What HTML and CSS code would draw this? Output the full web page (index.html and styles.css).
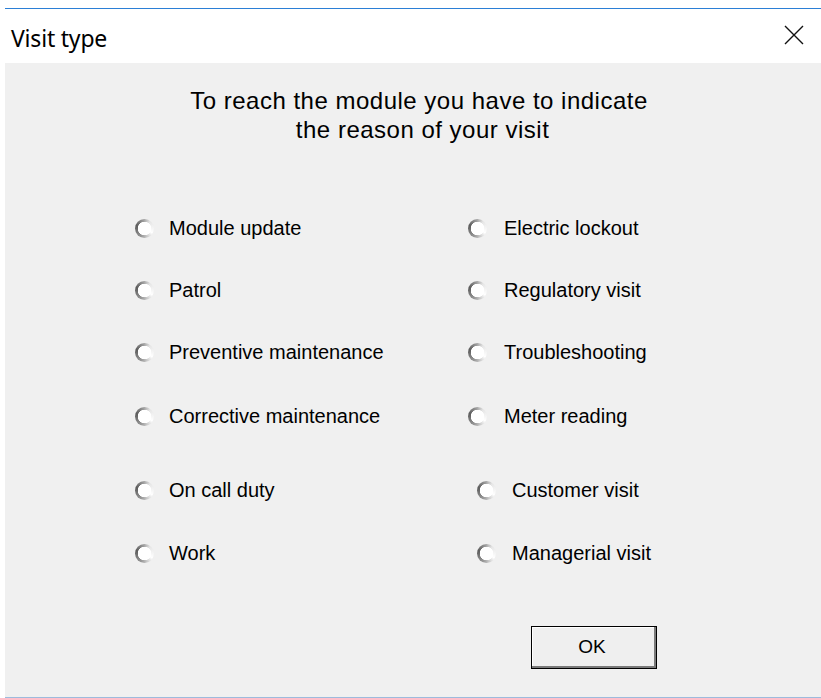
FILE: index.html
```html
<!DOCTYPE html>
<html lang="en">
<head>
<meta charset="utf-8">
<title>Visit type</title>
<link rel="stylesheet" href="styles.css">
</head>
<body>
<div class="dialog">
  <header class="titlebar">
    <span class="title">Visit type</span>
    <button class="close" aria-label="Close">
      <svg width="20" height="20" viewBox="0 0 20 20"><path d="M1 1 L19 19 M19 1 L1 19" stroke="#111" stroke-width="1.4" fill="none"/></svg>
    </button>
  </header>
  <main class="body">
    <p class="prompt">To reach the module you have to indicate<br>&nbsp;the reason of your visit</p>
    <form class="choices">
      <label class="choice"><span class="radio"></span>Module update</label>
      <label class="choice right"><span class="radio"></span>Electric lockout</label>
      <label class="choice"><span class="radio"></span>Patrol</label>
      <label class="choice right"><span class="radio"></span>Regulatory visit</label>
      <label class="choice"><span class="radio"></span>Preventive maintenance</label>
      <label class="choice right"><span class="radio"></span>Troubleshooting</label>
      <label class="choice"><span class="radio"></span>Corrective maintenance</label>
      <label class="choice right"><span class="radio"></span>Meter reading</label>
      <label class="choice"><span class="radio"></span>On call duty</label>
      <label class="choice shifted"><span class="radio"></span>Customer visit</label>
      <label class="choice"><span class="radio"></span>Work</label>
      <label class="choice shifted"><span class="radio"></span>Managerial visit</label>
    </form>
    <div class="actions">
      <button class="ok">OK</button>
    </div>
  </main>
</div>
</body>
</html>
```
FILE: styles.css
```css
html, body {
  margin: 0;
  padding: 0;
  background: #ffffff;
}

body {
  width: 821px;
  height: 698px;
  overflow: hidden;
  font-family: "Liberation Sans", Arial, sans-serif;
  color: #000;
}

.dialog {
  margin: 8px 0 0 5px;
  border-top: 1px solid #2b7fd6;
  border-bottom: 1px solid #9dbbdc;
  height: 688px;
  display: flex;
  flex-direction: column;
}

.titlebar {
  height: 54px;
  background: #ffffff;
  display: flex;
  align-items: center;
  justify-content: space-between;
  padding: 0 17px 0 6px;
}

.title {
  font-family: "Noto Sans", "Open Sans", sans-serif;
  font-size: 23px;
  letter-spacing: -0.2px;
  color: #000;
  padding-top: 4px;
}

.close {
  border: 0;
  background: none;
  padding: 0;
  width: 20px;
  height: 20px;
  display: flex;
  margin-top: -3px;
}

.body {
  flex: 1;
  background: #f0f0f0;
  display: flex;
  flex-direction: column;
}

.prompt {
  margin: 23px 0 0;
  padding-left: 12px;
  text-align: center;
  font-size: 24px;
  line-height: 29px;
  letter-spacing: 0.5px;
}

.choices {
  margin: 53px 0 0 130px;
  display: grid;
  grid-template-columns: 333px 300px;
  grid-template-rows: 62px 62px 62px 66px 82px 44px;
}

.choice {
  display: flex;
  align-items: center;
  gap: 15px;
  font-size: 20px;
  white-space: nowrap;
}

.choice.right {
  gap: 17px;
}

.choice.shifted {
  margin-left: 9px;
  gap: 16px;
}

.radio {
  width: 19px;
  height: 19px;
  border-radius: 50%;
  box-sizing: border-box;
  background:
    radial-gradient(circle, #ffffff 0 6.5px, transparent 7px),
    conic-gradient(from 200deg, #9a9a9a, #5c5c5c 90deg, #9a9a9a 150deg, #e6e6e6 200deg, #ffffff 280deg, #9a9a9a);
  flex: none;
}

.actions {
  display: flex;
  justify-content: flex-end;
  padding: 51px 164px 0 0;
}

.ok {
  width: 126px;
  height: 43px;
  box-sizing: border-box;
  border: 1px solid #000;
  background: #efefef;
  box-shadow: inset -2px -2px 0 #7a7a7a, inset 1px 1px 0 #ffffff;
  font-family: "Liberation Sans", Arial, sans-serif;
  font-size: 19px;
  color: #000;
  padding: 0 4px 2px 0;
}
```
